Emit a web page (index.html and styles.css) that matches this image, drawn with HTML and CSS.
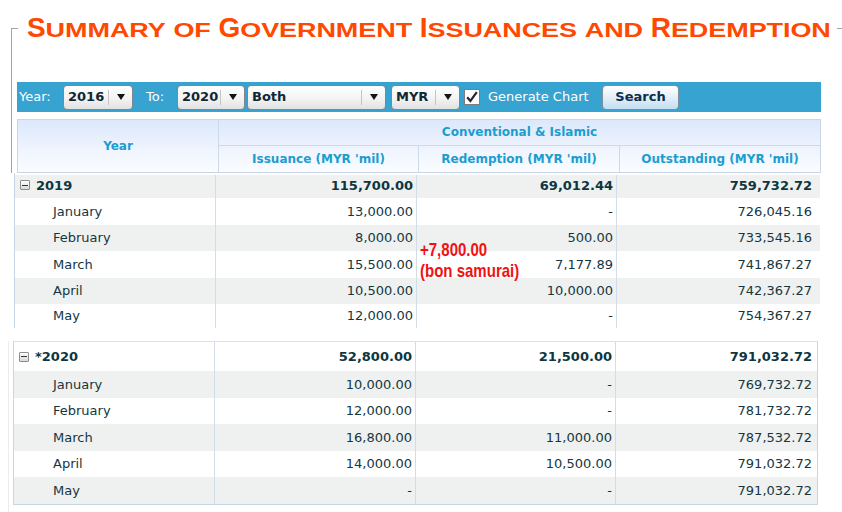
FILE: index.html
```html
<!DOCTYPE html>
<html>
<head>
<meta charset="utf-8">
<link rel="stylesheet" href="styles.css">
</head>
<body>
<fieldset class="panel">
  <legend class="title"><span class="big">S</span><span class="sc">ummary</span> <span class="sc">of</span> <span class="big">G</span><span class="sc">overnment</span> <span class="big">I</span><span class="sc">ssuances</span> <span class="sc">and</span> <span class="big">R</span><span class="sc">edemption</span></legend>
  <div class="toolbar">
    <span class="lbl lbl-year">Year:</span>
    <div class="select s-year"><span class="val">2016</span><span class="arr"></span></div>
    <span class="lbl lbl-to">To:</span>
    <div class="select s-to"><span class="val">2020</span><span class="arr"></span></div>
    <div class="select s-type"><span class="val">Both</span><span class="arr"></span></div>
    <div class="select s-cur"><span class="val">MYR</span><span class="arr"></span></div>
    <span class="check"><svg width="16" height="16" viewBox="0 0 16 16"><path d="M3.2 8.2 L6.4 12 L12.8 3.2" fill="none" stroke="#1d2a33" stroke-width="2.2"/></svg></span>
    <span class="lbl lbl-chart">Generate Chart</span>
    <button class="btn" type="button">Search</button>
  </div>
  <div class="thead">
    <div class="th th-year">Year</div>
    <div class="th th-group">Conventional &amp; Islamic</div>
    <div class="th">Issuance (MYR 'mil)</div>
    <div class="th">Redemption (MYR 'mil)</div>
    <div class="th th-last">Outstanding (MYR 'mil)</div>
  </div>
</fieldset>

<div class="block1">
  <div class="row first alt"><div class="yr"><span class="minus"></span>2019</div><div class="yr">115,700.00</div><div class="yr">69,012.44</div><div class="yr">759,732.72</div></div>
  <div class="row"><div>January</div><div>13,000.00</div><div>-</div><div>726,045.16</div></div>
  <div class="row alt"><div>February</div><div>8,000.00</div><div>500.00</div><div>733,545.16</div></div>
  <div class="row"><div>March</div><div>15,500.00</div><div>7,177.89</div><div>741,867.27</div></div>
  <div class="row alt"><div>April</div><div>10,500.00</div><div>10,000.00</div><div>742,367.27</div></div>
  <div class="row last"><div>May</div><div>12,000.00</div><div>-</div><div>754,367.27</div></div>
  <div class="note"><span>+7,800.00</span><span>(bon samurai)</span></div>
</div>

<div class="wrap2">
  <div class="block2">
    <div class="row first"><div class="yr"><span class="minus"></span>*2020</div><div class="yr">52,800.00</div><div class="yr">21,500.00</div><div class="yr">791,032.72</div></div>
    <div class="row alt"><div>January</div><div>10,000.00</div><div>-</div><div>769,732.72</div></div>
    <div class="row"><div>February</div><div>12,000.00</div><div>-</div><div>781,732.72</div></div>
    <div class="row alt"><div>March</div><div>16,800.00</div><div>11,000.00</div><div>787,532.72</div></div>
    <div class="row"><div>April</div><div>14,000.00</div><div>10,500.00</div><div>791,032.72</div></div>
    <div class="row alt"><div>May</div><div>-</div><div>-</div><div>791,032.72</div></div>
  </div>
</div>
</body>
</html>
```

FILE: styles.css
```css
* { box-sizing: border-box; }
html, body { margin: 0; padding: 0; background: #fff; }
body {
  width: 842px;
  overflow: hidden;
  font-family: "DejaVu Sans", Verdana, sans-serif;
  font-size: 13px;
  color: #14373f;
}

/* ---------- frame + title ---------- */
.panel {
  margin: 12px 0 0 11px;
  padding: 0 0 0 5px;
  border: 0;
  border-top: 1px solid #a3a3a3;
  border-left: 1px solid #a3a3a3;
  min-inline-size: 0;
}
.title {
  margin-left: 1px;
  padding: 0 6px 0 9px;
  font-family: "Liberation Sans", Arial, sans-serif;
  font-weight: bold;
  font-size: 28px;
  line-height: 32px;
  letter-spacing: -0.07px;
  color: #ff4800;
  white-space: nowrap;
}
.title .sc {
  display: inline-block;
  font-size: 27px;
  line-height: 27px;
  text-transform: uppercase;
  transform: scaleY(0.78);
  transform-origin: 0 22.8px;
}

/* ---------- toolbar ---------- */
.toolbar {
  margin-top: 38px;
  width: 804px;
  height: 30px;
  background: #37a3d0;
  display: flex;
  align-items: center;
  padding-left: 2px;
}
.lbl { color: #fff; white-space: nowrap; padding-bottom: 2px; }
.lbl-year { width: 44px; }
.lbl-to { width: 31px; margin-left: 13px; }
.lbl-chart { width: 114px; margin-left: 8px; }

.select {
  height: 25px;
  display: flex;
  align-items: stretch;
  border: 1px solid #7f878c;
  border-radius: 4px;
  background: linear-gradient(#ffffff, #f3f3f3 55%, #e2e2e2);
  font-weight: bold;
  color: #0f2833;
}
.select .val { flex: 1; display: flex; align-items: center; padding: 0 0 2px 4px; }
.select .arr {
  width: 24px;
  display: flex;
  align-items: center;
  justify-content: center;
  border-left: 1px solid #c4c4c4;
  margin: 4px 0;
}
.select .arr::after {
  content: "";
  border-left: 4px solid transparent;
  border-right: 4px solid transparent;
  border-top: 6px solid #141414;
}
.s-year { width: 70px; }
.s-to { width: 68px; }
.s-type { width: 139px; margin-left: 2px; }
.s-cur { width: 69px; margin-left: 5px; }

.check {
  width: 16px;
  height: 16px;
  margin-left: 4px;
  background: #fff;
  border: 1px solid #7d7d7d;
  display: flex;
}
.check svg { display: block; margin: -1px; }

.btn {
  width: 77px;
  height: 25px;
  padding: 0 0 1px;
  border: 1px solid #7f8e99;
  border-radius: 4px;
  background: linear-gradient(#ffffff, #e6f1f8 45%, #c4def0);
  font-family: "DejaVu Sans", Verdana, sans-serif;
  font-size: 13px;
  font-weight: bold;
  color: #0e2b4e;
}

/* ---------- header ---------- */
.thead {
  margin-top: 7px;
  width: 804px;
  display: grid;
  grid-template-columns: 201px 200px 201px 200px;
  grid-template-rows: 26px 26px;
  border: 1px solid #c8d6e8;
  background: linear-gradient(#dce8fb, #f0f5fe 60%, #fafcff);
}
.th {
  display: flex;
  align-items: center;
  justify-content: center;
  font-size: 12px;
  font-weight: bold;
  color: #1c9dd0;
  border-right: 1px solid #cbd9e9;
  padding-bottom: 1px;
}
.th-year { grid-row: 1 / 3; }
.th-group { grid-column: 2 / 5; border-right: 0; border-bottom: 1px solid #cbd9e9; }
.th-last { border-right: 0; }

/* ---------- data rows ---------- */
.row {
  display: grid;
  height: 26.5px;
}
.row > div {
  display: flex;
  align-items: center;
  justify-content: flex-end;
  white-space: nowrap;
  border-right: 1px solid #d2dde8;
  padding-right: 3px;
}
.row > div:first-child { justify-content: flex-start; padding-left: 38px; }
.row > div:last-child { border-right: 0; }
.row .yr { font-weight: bold; color: #0c3640; }
.alt { background: #eff1f0; }

.minus {
  width: 10px;
  height: 10px;
  margin-right: 6px;
  border: 1px solid #8e8e8e;
  border-radius: 1px;
  background: linear-gradient(#ffffff, #d9d9d9);
  display: flex;
  align-items: center;
  justify-content: center;
}
.minus::after {
  content: "";
  width: 6px;
  height: 1px;
  background: #333;
}

.block1 {
  position: relative;
  margin-left: 14px;
  width: 806px;
  border-left: 1px solid #c6d5e4;
  padding-top: 2px;
}
.block1 .row { grid-template-columns: 201px 201px 200px 203px; }
.block1 .row > div:last-child { padding-right: 8px; }
.block1 .row > div.yr:first-child { padding-left: 5px; }
.block1 .row.first { height: 23px; }
.block1 .row.first > div { padding-bottom: 3px; }
.block1 .row.last { height: 24px; }
.block1 .row.last > div { padding-bottom: 2px; }

.note {
  position: absolute;
  left: 405px;
  top: 66px;
  display: flex;
  flex-direction: column;
  font-family: "Liberation Sans", Arial, sans-serif;
  font-weight: bold;
  font-size: 19px;
  line-height: 21px;
  color: #f01212;
  transform: scaleX(0.79);
  transform-origin: left top;
  white-space: nowrap;
}

.wrap2 {
  margin: 13px 0 0 8px;
  padding: 0 0 12px 4px;
  border-left: 1px solid #ececec;
}
.block2 {
  width: 805px;
  border: 1px solid #c8d6e4;
  border-top-color: #dde2e6;
}
.block2 .row { grid-template-columns: 201px 201px 200px 201px; }
.block2 .row > div:first-child { padding-left: 39px; }
.block2 .row > div.yr:first-child { padding-left: 5px; }
.block2 .row > div:last-child { padding-right: 5px; }
.block2 .row.first { height: 29px; }
```
